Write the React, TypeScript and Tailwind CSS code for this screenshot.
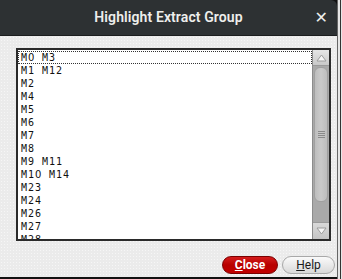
import { Fragment } from "react";

const items = [
  "M0 M3",
  "M1 M12",
  "M2",
  "M4",
  "M5",
  "M6",
  "M7",
  "M8",
  "M9 M11",
  "M10 M14",
  "M23",
  "M24",
  "M26",
  "M27",
  "M28",
];

// the mono font draws a dotted zero, the dialog's font does not
function Label({ text }: { text: string }) {
  return (
    <>
      {text.split("").map((ch, i) =>
        ch === "0" ? (
          <span key={i} className="font-['DejaVu_Sans',sans-serif] tracking-[0.64px]">
            0
          </span>
        ) : (
          <Fragment key={i}>{ch}</Fragment>
        )
      )}
    </>
  );
}

function Arrow({ up }: { up?: boolean }) {
  return (
    <svg width="11" height="8" viewBox="0 0 11 8">
      <path
        d={up ? "M1 7 L5.5 1 L10 7 Z" : "M1 1 L5.5 7 L10 1 Z"}
        fill="#f4f4f4"
        stroke="#9c9c9c"
        strokeWidth="1"
      />
    </svg>
  );
}

function ScrollBar() {
  return (
    <div className="w-[17px] h-full flex flex-col bg-[#a9a9a9] border-l border-[#8c8c8c]">
      <div className="h-[16px] flex items-center justify-center bg-gradient-to-b from-[#e6e6e6] to-[#c9c9c9] border-b border-[#9a9a9a]">
        <Arrow up />
      </div>
      <div className="mt-[1px] mx-[1px] h-[135px] rounded-[6px] bg-gradient-to-r from-[#bdbdbd] via-[#cacaca] to-[#bdbdbd] border border-[#a0a0a0] flex items-center justify-center">
        <div className="flex flex-col gap-[1px]">
          {[0, 1, 2, 3].map((i) => (
            <div key={i} className="w-[7px] h-[1px] bg-[#8a8a8a]" />
          ))}
        </div>
      </div>
      <div className="flex-1" />
      <div className="h-[17px] flex items-center justify-center bg-gradient-to-b from-[#d9d9d9] to-[#c4c4c4] border-t border-[#9a9a9a]">
        <Arrow />
      </div>
    </div>
  );
}

export default function App() {
  return (
    <div className="w-[342px] h-[279px] flex bg-[#111] overflow-hidden">
      <div className="w-[337px] h-[277px] flex flex-col rounded-tr-[6px] overflow-hidden">
        <div className="h-[36px] bg-[#2d3133] border-b border-[#1b1d1e] relative flex items-center justify-center">
          <span className="font-['Roboto',sans-serif] font-semibold text-[14px] text-[#eeeeec] tracking-[0.1px]">
            Highlight Extract Group
          </span>
          <span className="absolute right-[9px] top-[8px] font-['DejaVu_Sans',sans-serif] font-bold text-[16px] leading-[20px] text-[#eeeeec]">
            ✕
          </span>
        </div>
        <div className="flex-1 flex flex-col bg-[#ebebeb] bg-[radial-gradient(#f6f6f6_0.6px,transparent_0.6px)] bg-[length:3px_3px]">
          <div className="ml-[16px] mt-[12px] w-[315px] h-[193px] border-2 border-[#2a2a2a] bg-white flex">
            <div className="flex-1 pt-px font-['DejaVu_Sans_Mono',monospace] text-[10px] tracking-[0.98px] text-[#111] overflow-hidden">
              {items.map((it, i) => (
                <div
                  key={it}
                  className={
                    "h-[13px] leading-[13px] pl-[3px] whitespace-pre " +
                    (i === 0 ? "outline-1 outline-dotted outline-[#333] -outline-offset-1" : "")
                  }
                >
                  <Label text={it} />
                </div>
              ))}
            </div>
            <ScrollBar />
          </div>
          <div className="mt-[15px] flex justify-end gap-[4px] pr-[2px]">
            <button className="w-[56px] h-[18px] rounded-full bg-gradient-to-b from-[#d41a1a] via-[#b80000] to-[#c20000] border border-[#7a0000] font-['Roboto',sans-serif] font-bold text-[12px] leading-[16px] text-white">
              <span className="underline underline-offset-[1px]">C</span>lose
            </button>
            <button className="w-[53px] h-[18px] rounded-full bg-gradient-to-b from-[#fafafa] to-[#d9d9d9] border border-[#a8a8a8] font-['Roboto',sans-serif] text-[12px] leading-[16px] text-[#1a1a1a]">
              <span className="underline underline-offset-[1px]">H</span>elp
            </button>
          </div>
        </div>
      </div>
      <div className="w-[5px] h-full bg-[#e6e6e6] border-l border-[#666] flex">
        <div className="ml-[2px] w-px h-full bg-[#333]" />
      </div>
    </div>
  );
}
